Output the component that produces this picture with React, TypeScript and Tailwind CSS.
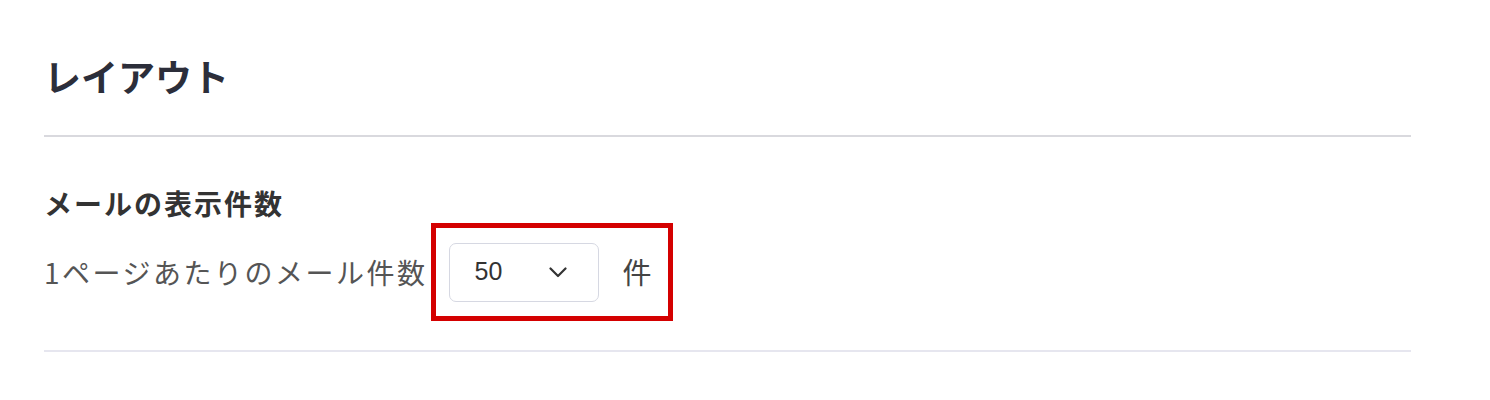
const JP = { fontFamily: '"Noto Sans CJK JP", "Liberation Sans", sans-serif' }

function Chevron() {
  return (
    <svg width="18" height="11" viewBox="0 0 18 11" fill="none" className="text-[#333333]">
      <polyline points="1.5,1.5 9,9 16.5,1.5" stroke="currentColor" strokeWidth="2.2" strokeLinecap="round" strokeLinejoin="round" />
    </svg>
  )
}

export default function App() {
  return (
    <div className="bg-white w-[1490px] h-[400px]" style={JP}>
      <div className="ml-[44px] w-[1367px] pt-[50px]">
        <h1 className="text-[37px] leading-[52px] font-bold text-[#2c2e3a]">レイアウト</h1>

        <div className="mt-[33px] h-[2px] bg-[#d9d9de]" />

        <section className="pt-[48px]">
          <h2 className="text-[28px] leading-[36px] font-bold text-[#333333] tracking-[2px]">メールの表示件数</h2>

          <div className="flex items-center mt-[2px]">
            <span className="text-[28px] text-[#555555] tracking-[2.5px] whitespace-nowrap">1ページあたりのメール件数</span>

            {/* 注目枠（赤） */}
            <div className="ml-[4px] flex items-center border-[5px] border-[#d40000] w-[242px] h-[98px] pl-[13px]">
              <div className="flex items-center justify-between w-[150px] h-[59px] rounded-[7px] border border-[#d6d8e2] bg-white pl-[24px] pr-[31px]">
                <span className="text-[25px] text-[#333333]" style={{ fontFamily: '"Liberation Sans", sans-serif' }}>50</span>
                <Chevron />
              </div>
              <span className="ml-[23px] text-[29px] text-[#444444]">件</span>
            </div>
          </div>
        </section>

        <div className="mt-[29px] h-[2px] bg-[#e6e6ef]" />
      </div>
    </div>
  )
}
